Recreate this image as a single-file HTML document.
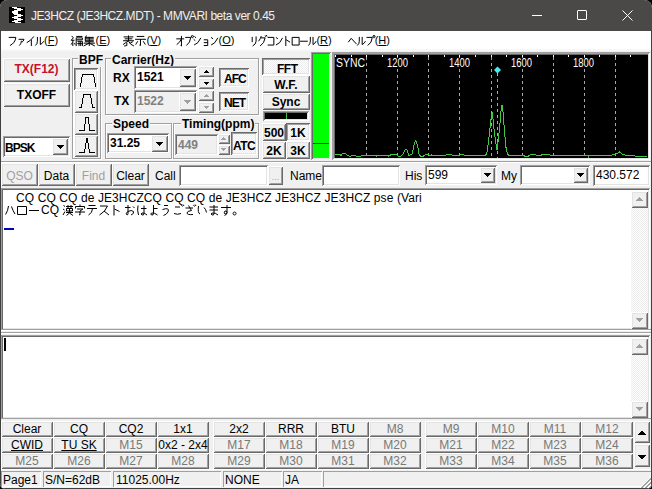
<!DOCTYPE html>
<html><head><meta charset="utf-8"><style>*{margin:0;padding:0;box-sizing:border-box}
html,body{width:652px;height:489px;overflow:hidden;background:#000}
body{position:relative;font-family:"Liberation Sans",sans-serif;font-size:12px;color:#000}
.a{position:absolute;white-space:nowrap;line-height:14px}
#win{position:absolute;left:0;top:0;width:652px;height:489px;background:#f0f0f0;border-radius:7px 8px 5px 5px;overflow:hidden}
.mb{position:absolute;height:16px;width:52px;padding-top:1px;background:#f0f0f0;box-shadow:inset 1px 1px #fff,inset -1px -1px #696969,inset 2px 2px #e3e3e3,inset -2px -2px #a0a0a0;text-align:center;font-size:12px;line-height:15px;white-space:nowrap}
.gy{color:#787878}
.menu{position:absolute;top:32px;font-size:12px;line-height:16px;white-space:nowrap}
</style></head><body>
<div id="win">
<div class="a" style="left:0px;top:0px;width:652px;height:31px;background:#4a4947"></div>
<svg class="a" style="left:9px;top:7px" width="16" height="16" shape-rendering="crispEdges"><rect width="16" height="16" fill="#000"/><g fill="#fff"><rect x="3" y="0" width="5" height="1"/><rect x="5" y="1" width="7" height="1"/><rect x="8" y="2" width="4" height="1"/><rect x="12" y="2" width="2" height="1"/><rect x="5" y="3" width="7" height="1"/><rect x="3" y="4" width="6" height="1"/><rect x="3" y="5" width="6" height="1"/><rect x="4" y="6" width="5" height="1"/><rect x="5" y="7" width="7" height="1"/><rect x="8" y="8" width="4" height="1"/><rect x="12" y="8" width="2" height="1"/><rect x="5" y="9" width="7" height="1"/><rect x="3" y="10" width="6" height="1"/><rect x="5" y="11" width="7" height="1"/><rect x="8" y="12" width="4" height="1"/><rect x="12" y="12" width="2" height="1"/><rect x="5" y="13" width="7" height="1"/><rect x="3" y="14" width="6" height="1"/><rect x="6" y="15" width="6" height="1"/></g></svg>
<div class="a" style="left:31px;top:9px;color:#f0f0f0;font-size:12px;line-height:14px;letter-spacing:-0.45px">JE3HCZ (JE3HCZ.MDT) - MMVARI beta ver 0.45</div>
<div class="a" style="left:532px;top:15px;width:10px;height:1px;background:#fff"></div>
<div class="a" style="left:577px;top:10px;width:10px;height:10px;border:1px solid #fff;border-radius:1px"></div>
<svg class="a" style="left:622px;top:10px" width="11" height="11" viewBox="0 0 11 11"><path d="M0.5 0.5L10.5 10.5M10.5 0.5L0.5 10.5" stroke="#fff" stroke-width="1"/></svg>
<div class="a" style="left:1px;top:31px;width:650px;height:18px;background:#fff"></div>
<div class="a" style="left:44.0px;top:33px;line-height:14px;font-size:11px">(<u>F</u>)</div>
<div class="a" style="left:95.5px;top:33px;line-height:14px;font-size:11px">(<u>E</u>)</div>
<div class="a" style="left:146.5px;top:33px;line-height:14px;font-size:11px">(<u>V</u>)</div>
<div class="a" style="left:218.5px;top:33px;line-height:14px;font-size:11px">(<u>O</u>)</div>
<div class="a" style="left:316.4px;top:33px;line-height:14px;font-size:11px">(<u>R</u>)</div>
<div class="a" style="left:374.7px;top:33px;line-height:14px;font-size:11px">(<u>H</u>)</div>
<div class="a" style="left:0px;top:31px;width:1px;height:458px;background:#404040"></div>
<div class="a" style="left:651px;top:31px;width:1px;height:458px;background:#404040"></div>
<div class="a" style="left:1px;top:49px;width:650px;height:2px;background:#f8f8f8"></div>
<div class="a" style="left:1px;top:161px;width:650px;height:1px;background:#a0a0a0"></div>
<div class="a" style="left:1px;top:162px;width:650px;height:1px;background:#fff"></div>
<div class="a" style="left:3px;top:58px;width:67px;height:24px;box-shadow:inset 1px 1px #fff,inset -1px -1px #696969,inset 2px 2px #e3e3e3,inset -2px -2px #a0a0a0;background:#f0f0f0;text-align:center;font-weight:bold;line-height:23px;color:#c8102a">TX(F12)</div>
<div class="a" style="left:3px;top:83px;width:67px;height:24px;box-shadow:inset 1px 1px #fff,inset -1px -1px #696969,inset 2px 2px #e3e3e3,inset -2px -2px #a0a0a0;background:#f0f0f0;text-align:center;font-weight:bold;line-height:24px">TXOFF</div>
<div class="a" style="left:3px;top:136px;width:67px;height:21px;box-shadow:inset 1px 1px #a0a0a0,inset -1px -1px #fff,inset 2px 2px #696969,inset -2px -2px #e3e3e3;background:#fff"></div>
<div class="a" style="left:5px;top:141px;font-weight:bold;letter-spacing:-1px">BPSK</div>
<div class="a" style="left:52px;top:138px;width:16px;height:17px;box-shadow:inset 1px 1px #fff,inset -1px -1px #696969,inset 2px 2px #e3e3e3,inset -2px -2px #a0a0a0;background:#f0f0f0;"></div>
<svg class="a" style="left:57px;top:145px" width="7" height="4" shape-rendering="crispEdges"><g fill="#000"><rect x="0" y="0" width="7" height="1"/><rect x="1" y="1" width="5" height="1"/><rect x="2" y="2" width="3" height="1"/><rect x="3" y="3" width="1" height="1"/></g></svg>
<div class="a" style="left:72px;top:58px;width:29px;height:101px;border:1px solid #a0a0a0;box-shadow:inset 1px 1px #fff,1px 1px #fff"></div>
<div class="a" style="left:78px;top:54px;font-weight:bold;background:#f0f0f0;padding:0 1px;line-height:13px">BPF</div>
<div class="a" style="left:74px;top:68px;width:24px;height:22px;box-shadow:inset 1px 1px #696969,inset -1px -1px #fff,inset 2px 2px #a0a0a0,inset -2px -2px #e3e3e3;background:repeating-conic-gradient(#ffffff 0% 25%, #ececec 0% 50%) 0 0/2px 2px;"></div>
<div class="a" style="left:74px;top:90px;width:24px;height:23px;box-shadow:inset 1px 1px #fff,inset -1px -1px #696969,inset 2px 2px #e3e3e3,inset -2px -2px #a0a0a0;background:#f0f0f0;"></div>
<div class="a" style="left:74px;top:113px;width:24px;height:22px;box-shadow:inset 1px 1px #fff,inset -1px -1px #696969,inset 2px 2px #e3e3e3,inset -2px -2px #a0a0a0;background:#f0f0f0;"></div>
<div class="a" style="left:74px;top:135px;width:24px;height:22px;box-shadow:inset 1px 1px #fff,inset -1px -1px #696969,inset 2px 2px #e3e3e3,inset -2px -2px #a0a0a0;background:#f0f0f0;"></div>
<svg class="a" style="left:0;top:0" width="110" height="170" shape-rendering="crispEdges">
<path d="M80.5 87V86L82.5 74.5H93.5L95.5 86V87" fill="none" stroke="#000"/>
<path d="M79 107.5H81.5L83.5 94.5H90.5L92.5 107.5H95" fill="none" stroke="#000"/>
<path d="M79 130.5H84.5L85.5 117.5H88.5L89.5 130.5H95" fill="none" stroke="#000"/>
<path d="M79 152.5H84.5L86.5 139.5H87.5L89.5 152.5H95" fill="none" stroke="#000"/>
<rect x="86" y="138" width="2" height="3" fill="#000"/>
</svg>
<div class="a" style="left:105px;top:58px;width:154px;height:57px;border:1px solid #a0a0a0;box-shadow:inset 1px 1px #fff,1px 1px #fff"></div>
<div class="a" style="left:111px;top:54px;font-weight:bold;background:#f0f0f0;padding:0 1px;line-height:13px">Carrier(Hz)</div>
<div class="a" style="left:113px;top:71px;font-weight:bold;">RX</div>
<div class="a" style="left:134px;top:66px;width:63px;height:23px;box-shadow:inset 1px 1px #a0a0a0,inset -1px -1px #fff,inset 2px 2px #696969,inset -2px -2px #e3e3e3;background:#fff"></div>
<div class="a" style="left:137px;top:70px;font-weight:bold;">1521</div>
<div class="a" style="left:179px;top:68px;width:17px;height:19px;box-shadow:inset 1px 1px #fff,inset -1px -1px #696969,inset 2px 2px #e3e3e3,inset -2px -2px #a0a0a0;background:#f0f0f0;"></div>
<svg class="a" style="left:184px;top:76px" width="7" height="4" shape-rendering="crispEdges"><g fill="#000"><rect x="0" y="0" width="7" height="1"/><rect x="1" y="1" width="5" height="1"/><rect x="2" y="2" width="3" height="1"/><rect x="3" y="3" width="1" height="1"/></g></svg>
<div class="a" style="left:198px;top:66px;width:16px;height:11px;box-shadow:inset 1px 1px #fff,inset -1px -1px #696969,inset 2px 2px #e3e3e3,inset -2px -2px #a0a0a0;background:#f0f0f0;"></div>
<svg class="a" style="left:204px;top:70px" width="5" height="3" shape-rendering="crispEdges"><g fill="#000"><rect x="0" y="2" width="5" height="1"/><rect x="1" y="1" width="3" height="1"/><rect x="2" y="0" width="1" height="1"/></g></svg>
<div class="a" style="left:198px;top:78px;width:16px;height:11px;box-shadow:inset 1px 1px #fff,inset -1px -1px #696969,inset 2px 2px #e3e3e3,inset -2px -2px #a0a0a0;background:#f0f0f0;"></div>
<svg class="a" style="left:204px;top:82px" width="5" height="3" shape-rendering="crispEdges"><g fill="#000"><rect x="0" y="0" width="5" height="1"/><rect x="1" y="1" width="3" height="1"/><rect x="2" y="2" width="1" height="1"/></g></svg>
<div class="a" style="left:114px;top:94px;font-weight:bold;">TX</div>
<div class="a" style="left:134px;top:90px;width:63px;height:23px;box-shadow:inset 1px 1px #a0a0a0,inset -1px -1px #fff,inset 2px 2px #696969,inset -2px -2px #e3e3e3;background:#f0f0f0"></div>
<div class="a" style="left:137px;top:94px;font-weight:bold;color:#808080">1522</div>
<div class="a" style="left:179px;top:92px;width:17px;height:19px;box-shadow:inset 1px 1px #fff,inset -1px -1px #696969,inset 2px 2px #e3e3e3,inset -2px -2px #a0a0a0;background:#f0f0f0;"></div>
<svg class="a" style="left:184px;top:100px" width="7" height="4" shape-rendering="crispEdges"><g fill="#a0a0a0"><rect x="0" y="0" width="7" height="1"/><rect x="1" y="1" width="5" height="1"/><rect x="2" y="2" width="3" height="1"/><rect x="3" y="3" width="1" height="1"/></g></svg>
<div class="a" style="left:198px;top:90px;width:16px;height:11px;box-shadow:inset 1px 1px #fff,inset -1px -1px #696969,inset 2px 2px #e3e3e3,inset -2px -2px #a0a0a0;background:#f0f0f0;"></div>
<svg class="a" style="left:204px;top:94px" width="5" height="3" shape-rendering="crispEdges"><g fill="#a0a0a0"><rect x="0" y="2" width="5" height="1"/><rect x="1" y="1" width="3" height="1"/><rect x="2" y="0" width="1" height="1"/></g></svg>
<div class="a" style="left:198px;top:102px;width:16px;height:11px;box-shadow:inset 1px 1px #fff,inset -1px -1px #696969,inset 2px 2px #e3e3e3,inset -2px -2px #a0a0a0;background:#f0f0f0;"></div>
<svg class="a" style="left:204px;top:106px" width="5" height="3" shape-rendering="crispEdges"><g fill="#a0a0a0"><rect x="0" y="0" width="5" height="1"/><rect x="1" y="1" width="3" height="1"/><rect x="2" y="2" width="1" height="1"/></g></svg>
<div class="a" style="left:219px;top:68px;width:30px;height:19px;box-shadow:inset 1px 1px #696969,inset -1px -1px #fff,inset 2px 2px #a0a0a0,inset -2px -2px #e3e3e3;background:repeating-conic-gradient(#ffffff 0% 25%, #ececec 0% 50%) 0 0/2px 2px;"></div>
<div class="a" style="left:224px;top:72px;font-weight:bold;letter-spacing:-1px">AFC</div>
<div class="a" style="left:219px;top:92px;width:30px;height:19px;box-shadow:inset 1px 1px #696969,inset -1px -1px #fff,inset 2px 2px #a0a0a0,inset -2px -2px #e3e3e3;background:repeating-conic-gradient(#ffffff 0% 25%, #ececec 0% 50%) 0 0/2px 2px;"></div>
<div class="a" style="left:224px;top:96px;font-weight:bold;letter-spacing:-1px">NET</div>
<div class="a" style="left:105px;top:123px;width:67px;height:36px;border:1px solid #a0a0a0;box-shadow:inset 1px 1px #fff,1px 1px #fff"></div>
<div class="a" style="left:112px;top:118px;font-weight:bold;background:#f0f0f0;padding:0 1px;line-height:13px">Speed</div>
<div class="a" style="left:107px;top:133px;width:62px;height:20px;box-shadow:inset 1px 1px #a0a0a0,inset -1px -1px #fff,inset 2px 2px #696969,inset -2px -2px #e3e3e3;background:#fff"></div>
<div class="a" style="left:110px;top:136px;font-weight:bold;">31.25</div>
<div class="a" style="left:151px;top:135px;width:17px;height:17px;box-shadow:inset 1px 1px #fff,inset -1px -1px #696969,inset 2px 2px #e3e3e3,inset -2px -2px #a0a0a0;background:#f0f0f0;"></div>
<svg class="a" style="left:156px;top:142px" width="7" height="4" shape-rendering="crispEdges"><g fill="#000"><rect x="0" y="0" width="7" height="1"/><rect x="1" y="1" width="5" height="1"/><rect x="2" y="2" width="3" height="1"/><rect x="3" y="3" width="1" height="1"/></g></svg>
<div class="a" style="left:173px;top:123px;width:86px;height:36px;border:1px solid #a0a0a0;box-shadow:inset 1px 1px #fff,1px 1px #fff"></div>
<div class="a" style="left:181px;top:118px;font-weight:bold;background:#f0f0f0;padding:0 1px;line-height:13px">Timing(ppm)</div>
<div class="a" style="left:175px;top:134px;width:43px;height:21px;box-shadow:inset 1px 1px #a0a0a0,inset -1px -1px #fff,inset 2px 2px #696969,inset -2px -2px #e3e3e3;background:#f0f0f0"></div>
<div class="a" style="left:178px;top:138px;font-weight:bold;color:#808080">449</div>
<div class="a" style="left:218px;top:134px;width:12px;height:10px;box-shadow:inset 1px 1px #fff,inset -1px -1px #696969,inset 2px 2px #e3e3e3,inset -2px -2px #a0a0a0;background:#f0f0f0;"></div>
<svg class="a" style="left:221px;top:137px" width="5" height="3" shape-rendering="crispEdges"><g fill="#a0a0a0"><rect x="0" y="2" width="5" height="1"/><rect x="1" y="1" width="3" height="1"/><rect x="2" y="0" width="1" height="1"/></g></svg>
<div class="a" style="left:218px;top:145px;width:12px;height:10px;box-shadow:inset 1px 1px #fff,inset -1px -1px #696969,inset 2px 2px #e3e3e3,inset -2px -2px #a0a0a0;background:#f0f0f0;"></div>
<svg class="a" style="left:221px;top:148px" width="5" height="3" shape-rendering="crispEdges"><g fill="#a0a0a0"><rect x="0" y="0" width="5" height="1"/><rect x="1" y="1" width="3" height="1"/><rect x="2" y="2" width="1" height="1"/></g></svg>
<div class="a" style="left:231px;top:132px;width:26px;height:23px;box-shadow:inset 1px 1px #696969,inset -1px -1px #fff,inset 2px 2px #a0a0a0,inset -2px -2px #e3e3e3;background:repeating-conic-gradient(#ffffff 0% 25%, #ececec 0% 50%) 0 0/2px 2px;"></div>
<div class="a" style="left:233px;top:139px;font-weight:bold;letter-spacing:-0.5px">ATC</div>
<div class="a" style="left:262px;top:58px;width:48px;height:17px;box-shadow:inset 1px 1px #696969,inset -1px -1px #fff,inset 2px 2px #a0a0a0,inset -2px -2px #e3e3e3;background:repeating-conic-gradient(#ffffff 0% 25%, #ececec 0% 50%) 0 0/2px 2px;"></div>
<div class="a" style="left:277px;top:62px;font-weight:bold;letter-spacing:-0.5px">FFT</div>
<div class="a" style="left:262px;top:75px;width:48px;height:18px;box-shadow:inset 1px 1px #fff,inset -1px -1px #696969,inset 2px 2px #e3e3e3,inset -2px -2px #a0a0a0;background:#f0f0f0;text-align:center;font-weight:bold;line-height:20px">W.F.</div>
<div class="a" style="left:262px;top:93px;width:48px;height:17px;box-shadow:inset 1px 1px #fff,inset -1px -1px #696969,inset 2px 2px #e3e3e3,inset -2px -2px #a0a0a0;background:#f0f0f0;text-align:center;font-weight:bold;line-height:19px">Sync</div>
<div class="a" style="left:263px;top:111px;width:46px;height:10px;background:#000;box-shadow:inset 1px 1px #a0a0a0,inset -1px -1px #fff,inset 2px 2px #696969,inset -2px -2px #e3e3e3"></div>
<div class="a" style="left:286px;top:113px;width:1px;height:6px;background:#40c040"></div>
<div class="a" style="left:262px;top:123px;width:24px;height:18px;box-shadow:inset 1px 1px #fff,inset -1px -1px #696969,inset 2px 2px #e3e3e3,inset -2px -2px #a0a0a0;background:#f0f0f0;text-align:center;font-weight:bold;line-height:20px">500</div>
<div class="a" style="left:286px;top:123px;width:24px;height:18px;box-shadow:inset 1px 1px #696969,inset -1px -1px #fff,inset 2px 2px #a0a0a0,inset -2px -2px #e3e3e3;background:repeating-conic-gradient(#ffffff 0% 25%, #ececec 0% 50%) 0 0/2px 2px;text-align:center;font-weight:bold;line-height:20px">1K</div>
<div class="a" style="left:262px;top:141px;width:24px;height:18px;box-shadow:inset 1px 1px #fff,inset -1px -1px #696969,inset 2px 2px #e3e3e3,inset -2px -2px #a0a0a0;background:#f0f0f0;text-align:center;font-weight:bold;line-height:20px">2K</div>
<div class="a" style="left:286px;top:141px;width:24px;height:18px;box-shadow:inset 1px 1px #fff,inset -1px -1px #696969,inset 2px 2px #e3e3e3,inset -2px -2px #a0a0a0;background:#f0f0f0;text-align:center;font-weight:bold;line-height:20px">3K</div>
<div class="a" style="left:311px;top:52px;width:20px;height:108px;background:#00ff00;box-shadow:inset 1px 1px #a0a0a0,inset -1px -1px #f0f0f0,inset 2px 2px #696969,inset -2px -2px #e3e3e3"></div>
<div class="a" style="left:313px;top:143px;width:16px;height:1px;background:#005000"></div>
<div class="a" style="left:332px;top:52px;width:318px;height:108px;background:#000;box-shadow:inset 1px 1px #a0a0a0,inset -1px -1px #fff,inset 2px 2px #a0a0a0,inset -2px -2px #e3e3e3,inset 3px 3px #696969"></div>
<svg class="a" style="left:0;top:0" width="652" height="170">
<path d="M366.5 55V158 M397.5 55V158 M428.5 55V158 M459.5 55V158 M491.5 55V158 M522.5 55V158 M553.5 55V158 M584.5 55V158 M615.5 55V158" stroke="#a8a8a8" stroke-dasharray="3,3" stroke-dashoffset="4" shape-rendering="crispEdges"/>
<path d="M335.5 55V57 M351.5 55V57 M366.5 55V57 M382.5 55V57 M397.5 55V57 M413.5 55V57 M428.5 55V57 M444.5 55V57 M459.5 55V57 M475.5 55V57 M491.5 55V57 M506.5 55V57 M522.5 55V57 M537.5 55V57 M553.5 55V57 M568.5 55V57 M584.5 55V57 M599.5 55V57 M615.5 55V57 M630.5 55V57" stroke="#ffffff" shape-rendering="crispEdges"/>
<path d="M497.5 73V158" stroke="#50d0d8" stroke-dasharray="3,3" stroke-dashoffset="0" shape-rendering="crispEdges"/>
<path d="M497.5 66.5L501 70L497.5 73.5L494 70Z" fill="#40f0f0"/>
<path fill="none" stroke="#40c840" d="M335 155 L337 154.5 L340 154.5 L341 155.5 L343 153 L345 153 L347 155 L349 156 L351 156 L352 155 L354 155 L356 156 L361 156 L362 155 L369 155 L371 156 L373 155 L375 155 L376.5 156 L378.5 155 L386.5 155 L388.5 156 L390.5 155 L393 154 L395 154 L397 155 L398.5 156.5 L401 156 L402.7 154.7 L404.3 151 L405.8 149.5 L407 149.8 L408 152.9 L408.6 155.3 L409.8 155 L412 154 L412.9 150.4 L413.8 146.1 L414.7 142.4 L415.5 140.6 L416.6 142.7 L417.5 145.5 L418.4 150.4 L419.2 155 L420.5 156 L423.6 156 L424.8 155 L427.9 154 L430 155.6 L431.6 155 L433.4 156 L437 155 L440 156 L442 155.5 L446 155 L449 154.5 L452 155 L455 156 L458 155 L460 155 L463 154.5 L465 155.5 L468 155 L472 155 L474 156 L479 155 L483 155 L485.6 155 L486.8 154 L488.6 140.5 L490.4 124.6 L491.7 113 L492.5 112.5 L493.5 124.6 L495.4 140.5 L497 150 L498.4 139.3 L499.9 124.6 L501.5 105.5 L502.5 106 L504 124.6 L505.8 146.7 L507.6 154 L509 155.5 L515 155 L518 156 L522 155 L527 157 L530 155 L533 154 L536 155 L540 156 L543 154 L546 154 L550 155 L560 155 L565 156 L570 155 L588 155 L588.5 157 L590 155 L604 155 L607 156 L612 155 L616 154 L619.5 152 L622 154 L625 155 L633 155 L635 156 L647 156" shape-rendering="crispEdges"/>
<rect x="335" y="58" width="31" height="10" fill="#000"/>
<text x="336" y="67" fill="#fff" font-size="12" font-family="Liberation Sans" textLength="29" lengthAdjust="spacingAndGlyphs">SYNC</text>
<rect x="386" y="58" width="23" height="10" fill="#000"/>
<text x="387" y="67" fill="#fff" font-size="12" font-family="Liberation Sans" textLength="21" lengthAdjust="spacingAndGlyphs">1200</text>
<rect x="448" y="58" width="23" height="10" fill="#000"/>
<text x="449" y="67" fill="#fff" font-size="12" font-family="Liberation Sans" textLength="21" lengthAdjust="spacingAndGlyphs">1400</text>
<rect x="510" y="58" width="23" height="10" fill="#000"/>
<text x="511" y="67" fill="#fff" font-size="12" font-family="Liberation Sans" textLength="21" lengthAdjust="spacingAndGlyphs">1600</text>
<rect x="572" y="58" width="23" height="10" fill="#000"/>
<text x="573" y="67" fill="#fff" font-size="12" font-family="Liberation Sans" textLength="21" lengthAdjust="spacingAndGlyphs">1800</text>
</svg>
<div class="a" style="left:1px;top:163px;width:37px;height:23px;box-shadow:inset 1px 1px #fff,inset -1px -1px #696969,inset 2px 2px #e3e3e3,inset -2px -2px #a0a0a0;background:#f0f0f0;text-align:center;line-height:27px;color:#a0a0a0">QSO</div>
<div class="a" style="left:38px;top:163px;width:37px;height:23px;box-shadow:inset 1px 1px #fff,inset -1px -1px #696969,inset 2px 2px #e3e3e3,inset -2px -2px #a0a0a0;background:#f0f0f0;text-align:center;line-height:27px;color:#000">Data</div>
<div class="a" style="left:75px;top:163px;width:37px;height:23px;box-shadow:inset 1px 1px #fff,inset -1px -1px #696969,inset 2px 2px #e3e3e3,inset -2px -2px #a0a0a0;background:#f0f0f0;text-align:center;line-height:27px;color:#a0a0a0">Find</div>
<div class="a" style="left:112px;top:163px;width:37px;height:23px;box-shadow:inset 1px 1px #fff,inset -1px -1px #696969,inset 2px 2px #e3e3e3,inset -2px -2px #a0a0a0;background:#f0f0f0;text-align:center;line-height:27px;color:#000">Clear</div>
<div class="a" style="left:155px;top:169px;">Call</div>
<div class="a" style="left:179px;top:165px;width:89px;height:21px;box-shadow:inset 1px 1px #a0a0a0,inset -1px -1px #fff,inset 2px 2px #696969,inset -2px -2px #e3e3e3;background:#fff"></div>
<div class="a" style="left:268px;top:166px;width:15px;height:19px;box-shadow:inset 1px 1px #fff,inset -1px -1px #696969,inset 2px 2px #e3e3e3,inset -2px -2px #a0a0a0;background:#f0f0f0;text-align:center;color:#a0a0a0;line-height:22px;font-size:9px">...</div>
<div class="a" style="left:290px;top:169px;">Name</div>
<div class="a" style="left:322px;top:165px;width:78px;height:21px;box-shadow:inset 1px 1px #a0a0a0,inset -1px -1px #fff,inset 2px 2px #696969,inset -2px -2px #e3e3e3;background:#fff"></div>
<div class="a" style="left:405px;top:169px;">His</div>
<div class="a" style="left:425px;top:165px;width:72px;height:20px;box-shadow:inset 1px 1px #a0a0a0,inset -1px -1px #fff,inset 2px 2px #696969,inset -2px -2px #e3e3e3;background:#fff"></div>
<div class="a" style="left:428px;top:168px;">599</div>
<div class="a" style="left:480px;top:167px;width:15px;height:16px;box-shadow:inset 1px 1px #fff,inset -1px -1px #696969,inset 2px 2px #e3e3e3,inset -2px -2px #a0a0a0;background:#f0f0f0;"></div>
<svg class="a" style="left:484px;top:173px" width="7" height="4" shape-rendering="crispEdges"><g fill="#000"><rect x="0" y="0" width="7" height="1"/><rect x="1" y="1" width="5" height="1"/><rect x="2" y="2" width="3" height="1"/><rect x="3" y="3" width="1" height="1"/></g></svg>
<div class="a" style="left:501px;top:169px;">My</div>
<div class="a" style="left:520px;top:165px;width:70px;height:20px;box-shadow:inset 1px 1px #a0a0a0,inset -1px -1px #fff,inset 2px 2px #696969,inset -2px -2px #e3e3e3;background:#fff"></div>
<div class="a" style="left:573px;top:167px;width:15px;height:16px;box-shadow:inset 1px 1px #fff,inset -1px -1px #696969,inset 2px 2px #e3e3e3,inset -2px -2px #a0a0a0;background:#f0f0f0;"></div>
<svg class="a" style="left:577px;top:173px" width="7" height="4" shape-rendering="crispEdges"><g fill="#000"><rect x="0" y="0" width="7" height="1"/><rect x="1" y="1" width="5" height="1"/><rect x="2" y="2" width="3" height="1"/><rect x="3" y="3" width="1" height="1"/></g></svg>
<div class="a" style="left:593px;top:165px;width:57px;height:21px;box-shadow:inset 1px 1px #a0a0a0,inset -1px -1px #fff,inset 2px 2px #696969,inset -2px -2px #e3e3e3;background:#fff"></div>
<div class="a" style="left:596px;top:168px;">430.572</div>
<div class="a" style="left:1px;top:188px;width:649px;height:142px;box-shadow:inset 1px 1px #a0a0a0,inset -1px -1px #fff,inset 2px 2px #696969,inset -2px -2px #e3e3e3;background:#fff"></div>
<div class="a" style="left:16px;top:192px;line-height:13px;letter-spacing:0.1px">CQ CQ CQ de JE3HCZCQ CQ CQ de JE3HCZ JE3HCZ JE3HCZ pse (Vari</div>
<div class="a" style="left:41px;top:204px;line-height:13px">CQ</div>
<div class="a" style="left:4px;top:228px;width:10px;height:2px;background:#0000c0"></div>
<div class="a" style="left:631px;top:191px;width:17px;height:138px;background:repeating-conic-gradient(#ffffff 0% 25%, #ececec 0% 50%) 0 0/2px 2px"></div>
<div class="a" style="left:631px;top:191px;width:17px;height:17px;box-shadow:inset 1px 1px #fff,inset -1px -1px #696969,inset 2px 2px #e3e3e3,inset -2px -2px #a0a0a0;background:#f0f0f0;"></div>
<svg class="a" style="left:636px;top:197px" width="7" height="4" shape-rendering="crispEdges"><g fill="#a0a0a0"><rect x="0" y="3" width="7" height="1"/><rect x="1" y="2" width="5" height="1"/><rect x="2" y="1" width="3" height="1"/><rect x="3" y="0" width="1" height="1"/></g></svg>
<div class="a" style="left:631px;top:312px;width:17px;height:17px;box-shadow:inset 1px 1px #fff,inset -1px -1px #696969,inset 2px 2px #e3e3e3,inset -2px -2px #a0a0a0;background:#f0f0f0;"></div>
<svg class="a" style="left:636px;top:318px" width="7" height="4" shape-rendering="crispEdges"><g fill="#a0a0a0"><rect x="0" y="0" width="7" height="1"/><rect x="1" y="1" width="5" height="1"/><rect x="2" y="2" width="3" height="1"/><rect x="3" y="3" width="1" height="1"/></g></svg>
<div class="a" style="left:1px;top:329px;width:650px;height:1px;background:#a0a0a0"></div>
<div class="a" style="left:1px;top:330px;width:650px;height:1px;background:#fff"></div>
<div class="a" style="left:1px;top:332px;width:650px;height:1px;background:#a0a0a0"></div>
<div class="a" style="left:1px;top:333px;width:650px;height:1px;background:#fff"></div>
<div class="a" style="left:1px;top:335px;width:649px;height:84px;box-shadow:inset 1px 1px #a0a0a0,inset -1px -1px #fff,inset 2px 2px #696969,inset -2px -2px #e3e3e3;background:#fff"></div>
<div class="a" style="left:4px;top:338px;width:2px;height:13px;background:#000"></div>
<div class="a" style="left:1px;top:418px;width:650px;height:1px;background:#a0a0a0"></div>
<div class="a" style="left:631px;top:338px;width:17px;height:80px;background:repeating-conic-gradient(#ffffff 0% 25%, #ececec 0% 50%) 0 0/2px 2px"></div>
<div class="a" style="left:631px;top:338px;width:17px;height:17px;box-shadow:inset 1px 1px #fff,inset -1px -1px #696969,inset 2px 2px #e3e3e3,inset -2px -2px #a0a0a0;background:#f0f0f0;"></div>
<svg class="a" style="left:636px;top:344px" width="7" height="4" shape-rendering="crispEdges"><g fill="#a0a0a0"><rect x="0" y="3" width="7" height="1"/><rect x="1" y="2" width="5" height="1"/><rect x="2" y="1" width="3" height="1"/><rect x="3" y="0" width="1" height="1"/></g></svg>
<div class="a" style="left:631px;top:401px;width:17px;height:17px;box-shadow:inset 1px 1px #fff,inset -1px -1px #696969,inset 2px 2px #e3e3e3,inset -2px -2px #a0a0a0;background:#f0f0f0;"></div>
<svg class="a" style="left:636px;top:407px" width="7" height="4" shape-rendering="crispEdges"><g fill="#a0a0a0"><rect x="0" y="0" width="7" height="1"/><rect x="1" y="1" width="5" height="1"/><rect x="2" y="2" width="3" height="1"/><rect x="3" y="3" width="1" height="1"/></g></svg>
<div class="mb" style="left:1px;top:421px">Clear</div>
<div class="mb" style="left:53px;top:421px">CQ</div>
<div class="mb" style="left:105px;top:421px">CQ2</div>
<div class="mb" style="left:157px;top:421px">1x1</div>
<div class="mb" style="left:213px;top:421px">2x2</div>
<div class="mb" style="left:265px;top:421px">RRR</div>
<div class="mb" style="left:317px;top:421px">BTU</div>
<div class="mb gy" style="left:369px;top:421px">M8</div>
<div class="mb gy" style="left:425px;top:421px">M9</div>
<div class="mb gy" style="left:477px;top:421px">M10</div>
<div class="mb gy" style="left:529px;top:421px">M11</div>
<div class="mb gy" style="left:581px;top:421px">M12</div>
<div class="mb" style="left:1px;top:437px"><u>CWID</u></div>
<div class="mb" style="left:53px;top:437px"><u>TU SK</u></div>
<div class="mb gy" style="left:105px;top:437px">M15</div>
<div class="mb" style="left:157px;top:437px">0x2 - 2x4</div>
<div class="mb gy" style="left:213px;top:437px">M17</div>
<div class="mb gy" style="left:265px;top:437px">M18</div>
<div class="mb gy" style="left:317px;top:437px">M19</div>
<div class="mb gy" style="left:369px;top:437px">M20</div>
<div class="mb gy" style="left:425px;top:437px">M21</div>
<div class="mb gy" style="left:477px;top:437px">M22</div>
<div class="mb gy" style="left:529px;top:437px">M23</div>
<div class="mb gy" style="left:581px;top:437px">M24</div>
<div class="mb gy" style="left:1px;top:453px">M25</div>
<div class="mb gy" style="left:53px;top:453px">M26</div>
<div class="mb gy" style="left:105px;top:453px">M27</div>
<div class="mb gy" style="left:157px;top:453px">M28</div>
<div class="mb gy" style="left:213px;top:453px">M29</div>
<div class="mb gy" style="left:265px;top:453px">M30</div>
<div class="mb gy" style="left:317px;top:453px">M31</div>
<div class="mb gy" style="left:369px;top:453px">M32</div>
<div class="mb gy" style="left:425px;top:453px">M33</div>
<div class="mb gy" style="left:477px;top:453px">M34</div>
<div class="mb gy" style="left:529px;top:453px">M35</div>
<div class="mb gy" style="left:581px;top:453px">M36</div>
<div class="a" style="left:634px;top:421px;width:16px;height:22px;box-shadow:inset 1px 1px #fff,inset -1px -1px #696969,inset 2px 2px #e3e3e3,inset -2px -2px #a0a0a0;background:#f0f0f0;"></div>
<svg class="a" style="left:638px;top:431px" width="8" height="4" shape-rendering="crispEdges"><g fill="#000"><rect x="0" y="3" width="8" height="1"/><rect x="1" y="2" width="6" height="1"/><rect x="2" y="1" width="4" height="1"/><rect x="3" y="0" width="2" height="1"/></g></svg>
<div class="a" style="left:634px;top:444px;width:16px;height:23px;box-shadow:inset 1px 1px #fff,inset -1px -1px #696969,inset 2px 2px #e3e3e3,inset -2px -2px #a0a0a0;background:#f0f0f0;"></div>
<svg class="a" style="left:638px;top:455px" width="8" height="4" shape-rendering="crispEdges"><g fill="#000"><rect x="0" y="0" width="8" height="1"/><rect x="1" y="1" width="6" height="1"/><rect x="2" y="2" width="4" height="1"/><rect x="3" y="3" width="2" height="1"/></g></svg>
<div class="a" style="left:1px;top:469px;width:650px;height:1px;background:#fff"></div>
<div class="a" style="left:1px;top:471px;width:40px;height:16px;box-shadow:inset 1px 1px #a0a0a0,inset -1px -1px #fff"></div>
<div class="a" style="left:3px;top:473px;">Page1</div>
<div class="a" style="left:43px;top:471px;width:68px;height:16px;box-shadow:inset 1px 1px #a0a0a0,inset -1px -1px #fff"></div>
<div class="a" style="left:45px;top:473px;">S/N=62dB</div>
<div class="a" style="left:113px;top:471px;width:108px;height:16px;box-shadow:inset 1px 1px #a0a0a0,inset -1px -1px #fff"></div>
<div class="a" style="left:116px;top:473px;">11025.00Hz</div>
<div class="a" style="left:223px;top:471px;width:59px;height:16px;box-shadow:inset 1px 1px #a0a0a0,inset -1px -1px #fff"></div>
<div class="a" style="left:225px;top:473px;">NONE</div>
<div class="a" style="left:283px;top:471px;width:39px;height:16px;box-shadow:inset 1px 1px #a0a0a0,inset -1px -1px #fff"></div>
<div class="a" style="left:285px;top:473px;">JA</div>
<div class="a" style="left:323px;top:471px;width:328px;height:16px;box-shadow:inset 1px 1px #a0a0a0,inset -1px -1px #fff"></div>
<div class="a" style="left:0px;top:488px;width:652px;height:1px;background:#404040"></div>
<svg class="a" style="left:636px;top:474px" width="15" height="15" shape-rendering="crispEdges"><path d="M3.5 14.5L14.5 3.5M7.5 14.5L14.5 7.5M11.5 14.5L14.5 11.5" stroke="#fff"/><path d="M4.5 14.5L14.5 4.5M5.5 14.5L14.5 5.5M8.5 14.5L14.5 8.5M9.5 14.5L14.5 9.5M12.5 14.5L14.5 12.5M13.5 14.5L14.5 13.5" stroke="#a0a0a0"/></svg>
<svg class="a" style="left:0;top:0" width="652" height="489" fill="none" stroke-width="1"><path d="M1.5 2.5H10Q9.5 8 3 11" transform="translate(7.50,35.00) scale(0.8333,0.9583)" stroke="#000" vector-effect="non-scaling-stroke"/><path d="M2.5 4.5H9Q8.5 6.5 6.5 7.5M6 6Q5.5 9.5 3.5 11" transform="translate(16.50,35.00) scale(0.8333,0.9583)" stroke="#000" vector-effect="non-scaling-stroke"/><path d="M10 1.5Q6.5 6 1.5 8M7 5V11.5" transform="translate(25.50,35.00) scale(0.8333,0.9583)" stroke="#000" vector-effect="non-scaling-stroke"/><path d="M3.5 2V6.5Q3.5 9.5 1 11M7 2V10Q9.5 9 11 6.5" transform="translate(34.50,35.00) scale(0.8333,0.9583)" stroke="#000" vector-effect="non-scaling-stroke"/><path d="M1.5 1L3 3L1 5.5H4M2.5 5.5V11.5M1 10L2 8M4 8.5L4.5 10M5.5 1.5H11M5.5 3H11V5H5.5V3M5.5 5V11.5M6.5 6.5H11V11.5M8 6.5V11.5M9.5 6.5V11.5M6.5 9H11" transform="translate(70.00,35.00) scale(1.1250,0.9583)" stroke="#000" vector-effect="non-scaling-stroke"/><path d="M3.5 0.5L2.5 3M2.5 2V7M2.5 2.5H10M2.5 4H10M2.5 5.5H10M2.5 7H10M6 2V7M1 8.5H11M6 7V11.5M6 8.5L1 11.5M6 8.5L11 11.5" transform="translate(82.50,35.00) scale(1.1250,0.9583)" stroke="#000" vector-effect="non-scaling-stroke"/><path d="M1.5 2H10.5M2.5 4H9.5M1 6H11M6 0.5V6M6 6L1 10M4.5 8V11L2 11.5M6 6.5Q7.5 10 11 11.5M10 7L7.5 8.5" transform="translate(122.00,35.00) scale(1.0833,0.9583)" stroke="#000" vector-effect="non-scaling-stroke"/><path d="M2.5 1.5H9.5M1 4.5H11M6 4.5V11L5 10.5M3.5 6.5L1.5 10M8.5 6.5L10.5 10" transform="translate(134.00,35.00) scale(1.0833,0.9583)" stroke="#000" vector-effect="non-scaling-stroke"/><path d="M1 4H11M7.5 1V11.5L6.5 11M7.5 4Q5.5 8 1.5 10" transform="translate(175.50,35.00) scale(0.7917,0.9583)" stroke="#000" vector-effect="non-scaling-stroke"/><path d="M1.5 2.5H8.5Q8 8 3 11M10.5 0.5A1.2 1.2 0 1 0 10.6 0.5Z" transform="translate(184.00,35.00) scale(0.7917,0.9583)" stroke="#000" vector-effect="non-scaling-stroke"/><path d="M2.5 1.5L4.5 3M1.5 4.5L3.5 6M2 10.5Q7.5 9 10.5 3" transform="translate(192.50,35.00) scale(0.7917,0.9583)" stroke="#000" vector-effect="non-scaling-stroke"/><path d="M3.5 5H8.5V11H3.5M3.5 8H8.5" transform="translate(201.00,35.00) scale(0.7917,0.9583)" stroke="#000" vector-effect="non-scaling-stroke"/><path d="M2 2.5L4.5 4M2 10.5Q7.5 9 10.5 3" transform="translate(209.50,35.00) scale(0.7917,0.9583)" stroke="#000" vector-effect="non-scaling-stroke"/><path d="M3.5 2V7.5M8.5 1.5V6.5Q8.5 9.5 4 11.5" transform="translate(249.50,35.00) scale(0.7750,0.9583)" stroke="#000" vector-effect="non-scaling-stroke"/><path d="M4.5 1Q3.5 4 1 6.5M4 3H9.5Q8.5 8.5 3 11.5M9.5 0.5L10.5 2M11 0L12 1.5" transform="translate(257.80,35.00) scale(0.7750,0.9583)" stroke="#000" vector-effect="non-scaling-stroke"/><path d="M2 2.5H10V10.5H2" transform="translate(266.10,35.00) scale(0.7750,0.9583)" stroke="#000" vector-effect="non-scaling-stroke"/><path d="M2 2.5L4.5 4M2 10.5Q7.5 9 10.5 3" transform="translate(274.40,35.00) scale(0.7750,0.9583)" stroke="#000" vector-effect="non-scaling-stroke"/><path d="M4 1V11.5M4.5 5L9.5 7.5" transform="translate(282.70,35.00) scale(0.7750,0.9583)" stroke="#000" vector-effect="non-scaling-stroke"/><path d="M1.5 2.5H10.5V10.5H1.5Z" transform="translate(291.00,35.00) scale(0.7750,0.9583)" stroke="#000" vector-effect="non-scaling-stroke"/><path d="M1 6.5H11" transform="translate(299.30,35.00) scale(0.7750,0.9583)" stroke="#000" vector-effect="non-scaling-stroke"/><path d="M3.5 2V6.5Q3.5 9.5 1 11M7 2V10Q9.5 9 11 6.5" transform="translate(307.60,35.00) scale(0.7750,0.9583)" stroke="#000" vector-effect="non-scaling-stroke"/><path d="M1 7.5L4.5 3.5L11 9.5" transform="translate(347.50,35.00) scale(0.8250,0.9583)" stroke="#000" vector-effect="non-scaling-stroke"/><path d="M3.5 2V6.5Q3.5 9.5 1 11M7 2V10Q9.5 9 11 6.5" transform="translate(356.40,35.00) scale(0.8250,0.9583)" stroke="#000" vector-effect="non-scaling-stroke"/><path d="M1.5 2.5H8.5Q8 8 3 11M10.5 0.5A1.2 1.2 0 1 0 10.6 0.5Z" transform="translate(365.30,35.00) scale(0.8250,0.9583)" stroke="#000" vector-effect="non-scaling-stroke"/><path d="M4.5 2Q4 7 1.5 10.5M7.5 2.5Q9 7 11 10" transform="translate(4.00,204.00) scale(1.0000,1.0000)" stroke="#000" vector-effect="non-scaling-stroke"/><path d="M1.5 2.5H10.5V10.5H1.5Z" transform="translate(16.00,204.00) scale(1.0000,1.0000)" stroke="#000" vector-effect="non-scaling-stroke"/><path d="M1 6.5H11" transform="translate(28.00,204.00) scale(1.0000,1.0000)" stroke="#000" vector-effect="non-scaling-stroke"/><path d="M1.5 1.5L3 2.5M1 5L2.5 6M1 11L3 7.5M4 2.5H11M6 1V4M9 1V4M4.5 4.5H10.5V7H4.5ZM7.5 4.5V9M4 8.5H11M7.5 9L4.5 11.5M7.5 9L11 11.5" transform="translate(62.00,204.00) scale(1.0000,1.0000)" stroke="#000" vector-effect="non-scaling-stroke"/><path d="M6 0.5V2M1.5 4.5V2.5H10.5V4.5M3 5H9L6 7V11L5 10.5M1 8H11" transform="translate(74.00,204.00) scale(1.0000,1.0000)" stroke="#000" vector-effect="non-scaling-stroke"/><path d="M2.5 1.5H9.5M1 4.5H11M6.5 4.5Q6.5 9 2.5 11" transform="translate(86.00,204.00) scale(1.0000,1.0000)" stroke="#000" vector-effect="non-scaling-stroke"/><path d="M2 2H9.5Q7.5 7.5 1.5 11M6 7L11 11" transform="translate(98.00,204.00) scale(1.0000,1.0000)" stroke="#000" vector-effect="non-scaling-stroke"/><path d="M4 1V11.5M4.5 5L9.5 7.5" transform="translate(110.00,204.00) scale(1.0000,1.0000)" stroke="#000" vector-effect="non-scaling-stroke"/><path d="M1 3.5H6.5M4 1V9.5Q4 11.5 2.5 10.5Q1 9.5 4 7.5Q7.5 5.5 9.5 7.5Q10.5 9.5 7 11M9 2.5L10.5 4" transform="translate(124.00,204.00) scale(1.0000,1.0000)" stroke="#000" vector-effect="non-scaling-stroke"/><path d="M2 1.5Q1 6 2.5 11M5 4.5H10.5M8 1.5V9.5Q8 11.5 6 11Q4.5 10 6 9Q8.5 8.5 11 11" transform="translate(136.00,204.00) scale(1.0000,1.0000)" stroke="#000" vector-effect="non-scaling-stroke"/><path d="M5.5 1V9.5Q5.5 11.5 3.5 11Q2 10 3.5 9Q6.5 8.5 9.5 11M5.5 4.5H9.5" transform="translate(148.00,204.00) scale(1.0000,1.0000)" stroke="#000" vector-effect="non-scaling-stroke"/><path d="M4 1.5H8M2.5 5.5Q10 3 8 8Q6.5 10.5 3.5 11.5" transform="translate(160.00,204.00) scale(1.0000,1.0000)" stroke="#000" vector-effect="non-scaling-stroke"/><path d="M3 3H8M2 9.5Q5.5 11 9 9.5M9.5 1L10.5 2.5M11 0.5L12 2" transform="translate(172.00,204.00) scale(1.0000,1.0000)" stroke="#000" vector-effect="non-scaling-stroke"/><path d="M1.5 4H9M4.5 1.5L7.5 6.5Q3 7 3 9Q3 11 9 10.5M9.5 1L10.5 2.5M11 0.5L12 2" transform="translate(184.00,204.00) scale(1.0000,1.0000)" stroke="#000" vector-effect="non-scaling-stroke"/><path d="M2.5 2Q1.5 9 4 10M8 3.5Q10 5.5 10.5 8.5" transform="translate(196.00,204.00) scale(1.0000,1.0000)" stroke="#000" vector-effect="non-scaling-stroke"/><path d="M1.5 3H10M1.5 6H10M6 1V9.5Q6 11.5 4 11Q2.5 10 4 9Q7.5 8.5 10 11" transform="translate(208.00,204.00) scale(1.0000,1.0000)" stroke="#000" vector-effect="non-scaling-stroke"/><path d="M1 3.5H11M7 1V8.5Q7 10.5 5 10Q3.5 9 5 7Q7 6.5 7 8.5Q7 10.5 4.5 11.5" transform="translate(220.00,204.00) scale(1.0000,1.0000)" stroke="#000" vector-effect="non-scaling-stroke"/><path d="M2.5 8A1.5 1.5 0 1 0 2.6 8Z" transform="translate(232.00,204.00) scale(1.0000,1.0000)" stroke="#000" vector-effect="non-scaling-stroke"/></svg>
</div>
</body></html>
